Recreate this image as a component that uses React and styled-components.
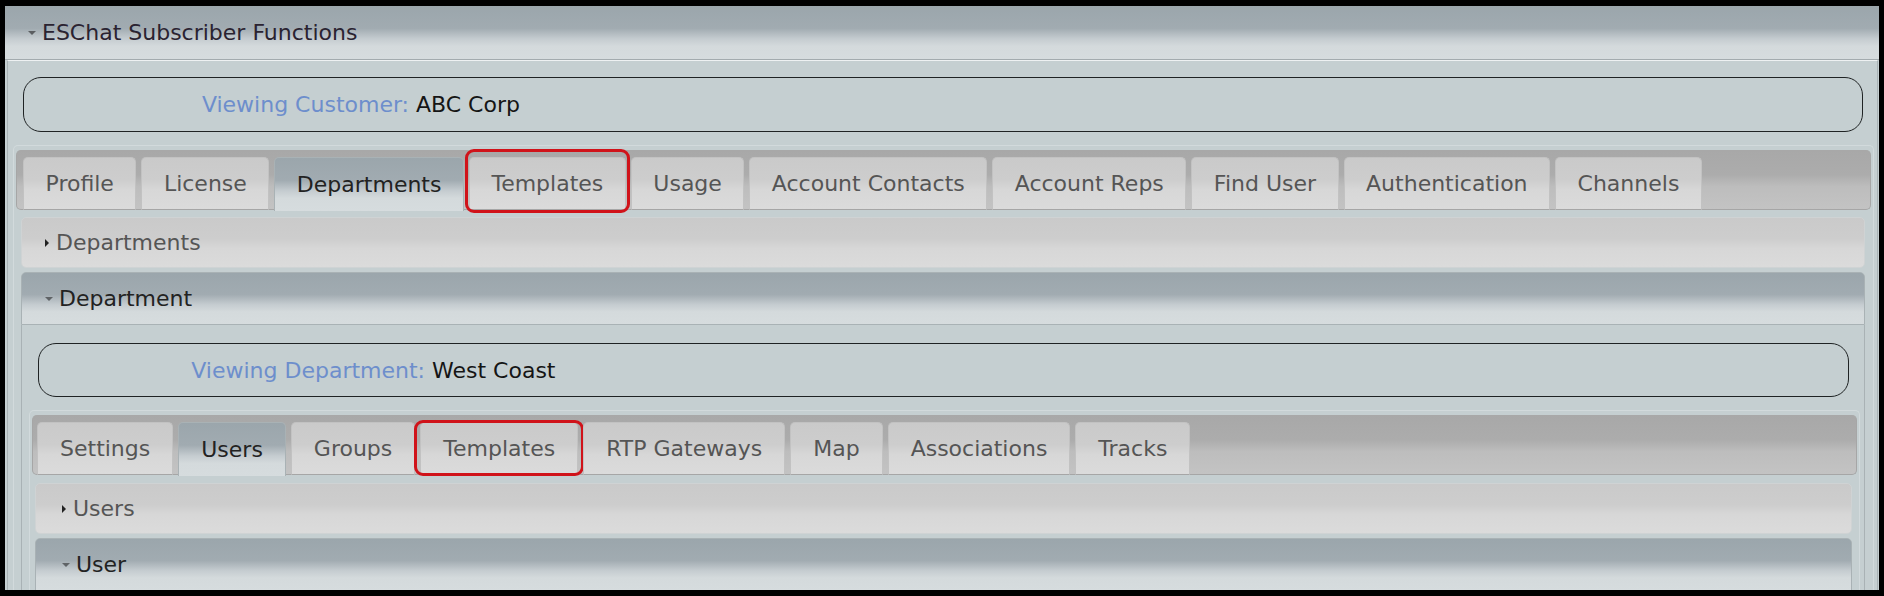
import React from "react"
import styled, { createGlobalStyle, css } from "styled-components"

const GlobalStyle = createGlobalStyle`
  html, body {
    margin: 0;
    padding: 0;
    background: #000;
  }
  body {
    font-family: "DejaVu Sans", Verdana, sans-serif;
    font-size: 22px;
  }
`

const blueGlass = css`
  background: linear-gradient(
    to bottom,
    #9ba6ac 0%,
    #a1abb1 42%,
    #c5ccd0 62%,
    #d4dadc 76%,
    #d6dcde 100%
  );
`

const grayGlass = css`
  background: linear-gradient(
    to bottom,
    #cacaca 0%,
    #cdcdcd 42%,
    #d7d7d7 62%,
    #dbdbdb 100%
  );
`

const barGlass = css`
  background: linear-gradient(
    to bottom,
    #a8a8a8 0%,
    #acacac 42%,
    #bdbdbd 62%,
    #c3c3c3 100%
  );
`

const Frame = styled.div`
  width: 1874px;
  height: 584px;
  margin: 6px 5px;
  overflow: hidden;
  background: #c5cfd1;
`

const MainHeader = styled.div`
  display: flex;
  align-items: center;
  height: 53px;
  padding-left: 23px;
  border-bottom: 1px solid #a3abae;
  color: #2a2331;
  ${blueGlass}
`

const Arrow = styled.span`
  display: inline-block;
  width: 0;
  height: 0;
  margin-right: 6px;
  ${(p) =>
    p.$open
      ? css`
          border-left: 4px solid transparent;
          border-right: 4px solid transparent;
          border-top: 4px solid ${p.$color || "#555"};
        `
      : css`
          border-top: 4px solid transparent;
          border-bottom: 4px solid transparent;
          border-left: 4px solid ${p.$color || "#222"};
          margin-right: 7px;
        `}
`

const Panel = styled.div`
  margin: 0 1px 0 2px;
  border: 1px solid #a9b2b5;
  border-top-color: #eef1f2;
  padding-top: 16px;
  min-height: 600px;
`

const InfoBox = styled.div`
  display: flex;
  align-items: center;
  height: ${(p) => p.$h}px;
  margin: 0 ${(p) => p.$mr}px 0 ${(p) => p.$ml}px;
  border: 1px solid #1f2324;
  border-radius: 18px;
`

const InfoLabel = styled.span`
  display: inline-block;
  width: ${(p) => p.$w}px;
  text-align: right;
  color: #6d8ecc;
`

const InfoValue = styled.span`
  margin-left: 7px;
  color: #151515;
`

const TabWidget = styled.div`
  margin: ${(p) => p.$mt}px ${(p) => p.$mr}px 0 ${(p) => p.$ml}px;
  border: 1px solid #d2dadc;
  border-bottom: none;
  border-radius: 5px 5px 0 0;
  padding: 4px 2px 0;
`

const TabBar = styled.div`
  display: flex;
  align-items: flex-end;
  gap: 5px;
  height: 52px;
  padding: 7px ${(p) => p.$pl}px 0;
  border: 1px solid #a6a6a6;
  border-top: none;
  border-radius: 5px;
  ${barGlass}
`

const Tab = styled.div`
  position: relative;
  display: flex;
  align-items: center;
  height: 51px;
  padding: 0 ${(p) => p.$pad}px;
  margin-bottom: -1px;
  border: 1px solid #c2c2c2;
  border-bottom-color: #a6a6a6;
  border-radius: 5px 5px 0 0;
  color: #555;
  white-space: nowrap;
  ${grayGlass}

  ${(p) =>
    p.$active &&
    css`
      height: 53px;
      margin-bottom: -2px;
      border-color: #a9b2b5;
      border-bottom: none;
      color: #222;
      ${blueGlass}
    `}
`

const Marker = styled.span`
  position: absolute;
  top: ${(p) => p.$t}px;
  bottom: ${(p) => p.$b}px;
  left: ${(p) => p.$l}px;
  right: ${(p) => p.$r}px;
  border: 3px solid #d0131a;
  border-radius: 9px;
  pointer-events: none;
`

const TabContent = styled.div`
  padding: ${(p) => p.$pt}px ${(p) => p.$pr}px 0 ${(p) => p.$pl}px;
`

const AccHeader = styled.div`
  display: flex;
  align-items: center;
  height: ${(p) => (p.$open ? 51 : 49)}px;
  padding-left: ${(p) => p.$indent || 23}px;
  margin-bottom: 4px;
  border: 1px solid #cfd3d4;
  border-radius: 5px;
  color: #555;
  ${grayGlass}

  ${(p) =>
    p.$open &&
    css`
      margin-bottom: 0;
      border-color: #a9b2b5;
      border-radius: 5px 5px 0 0;
      color: #222;
      ${blueGlass}
    `}
`

const AccBody = styled.div`
  border: 1px solid #a9b2b5;
  border-top: none;
  padding-top: 18px;
  min-height: 400px;
`

const mainTabs = [
  "Profile",
  "License",
  "Departments",
  "Templates",
  "Usage",
  "Account Contacts",
  "Account Reps",
  "Find User",
  "Authentication",
  "Channels",
]

const subTabs = [
  "Settings",
  "Users",
  "Groups",
  "Templates",
  "RTP Gateways",
  "Map",
  "Associations",
  "Tracks",
]

const Tabs = ({ items, active, marked, marker, pl, pad }) => (
  <TabBar $pl={pl}>
    {items.map((t) => (
      <Tab key={t} $active={t === active} $pad={pad}>
        {t}
        {t === marked && (
          <Marker $t={marker[0]} $r={marker[1]} $b={marker[2]} $l={marker[3]} />
        )}
      </Tab>
    ))}
  </TabBar>
)

const App = () => (
  <>
    <GlobalStyle />
    <Frame>
      <MainHeader>
        <Arrow $open $color="#5b5e61" />
        ESChat Subscriber Functions
      </MainHeader>
      <Panel>
        <InfoBox $h={53} $ml={15} $mr={14}>
          <InfoLabel $w={385}>Viewing Customer:</InfoLabel>
          <InfoValue>ABC Corp</InfoValue>
        </InfoBox>
        <TabWidget $mt={13} $ml={5} $mr={3}>
          <Tabs
            items={mainTabs}
            active="Departments"
            marked="Templates"
            marker={[-9, -5, -4, -5]}
            pl={6}
            pad={21.5}
          />
          <TabContent $pt={7} $pl={5} $pr={6}>
            <AccHeader>
              <Arrow />
              Departments
            </AccHeader>
            <AccHeader $open>
              <Arrow $open $color="#5f6366" />
              Department
            </AccHeader>
            <AccBody>
              <InfoBox $h={52} $ml={16} $mr={15}>
                <InfoLabel $w={386}>Viewing Department:</InfoLabel>
                <InfoValue>West Coast</InfoValue>
              </InfoBox>
              <TabWidget $mt={13} $ml={7} $mr={4}>
                <Tabs
                  items={subTabs}
                  active="Users"
                  marked="Templates"
                  marker={[-3, -7, -2, -7]}
                  pl={4}
                  pad={22}
                />
                <TabContent $pt={8} $pl={3} $pr={5}>
                  <AccHeader $indent={26}>
                    <Arrow />
                    Users
                  </AccHeader>
                  <AccHeader $open $indent={26}>
                    <Arrow $open $color="#5f6366" />
                    User
                  </AccHeader>
                  <AccBody />
                </TabContent>
              </TabWidget>
            </AccBody>
          </TabContent>
        </TabWidget>
      </Panel>
    </Frame>
  </>
)

export default App
